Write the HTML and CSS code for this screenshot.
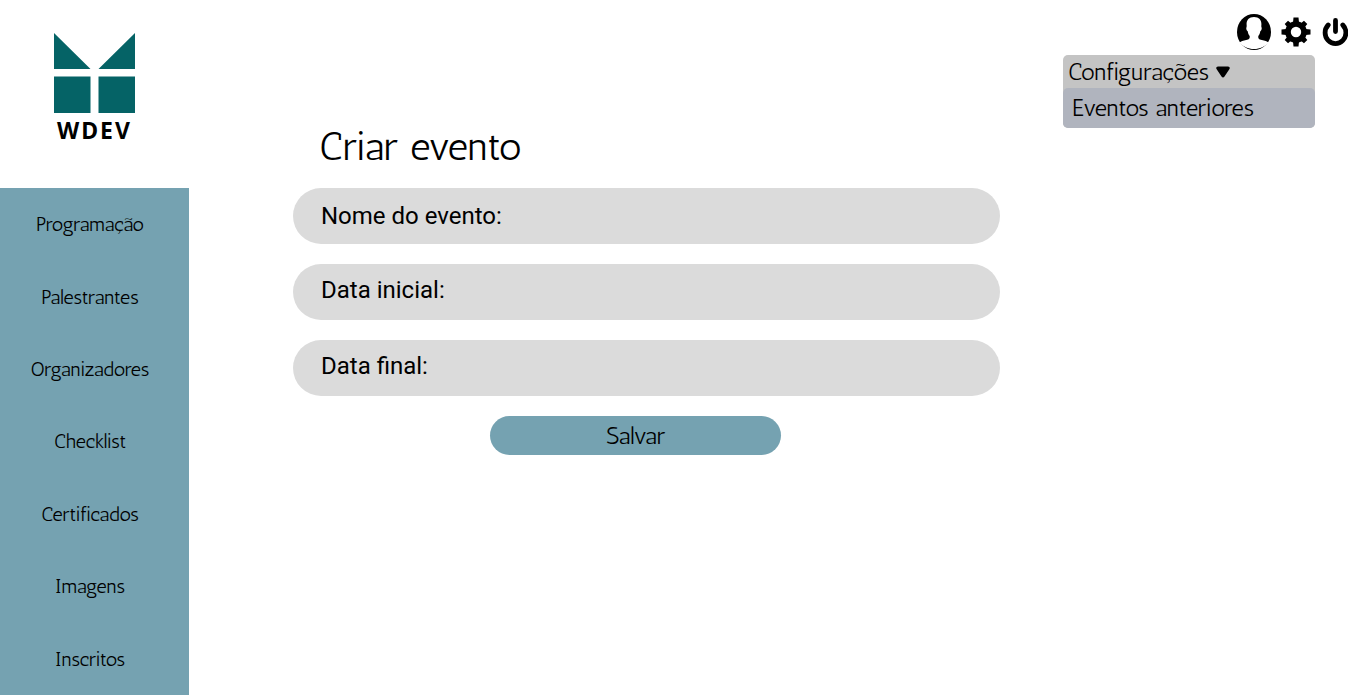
FILE: index.html
```html
<!DOCTYPE html>
<html lang="pt-BR">
<head>
<meta charset="utf-8">
<meta name="viewport" content="width=device-width, initial-scale=1">
<title>Criar evento</title>
<link rel="stylesheet" href="styles.css">
</head>
<body>
<div class="layout">
  <aside class="sidebar">
    <div class="brand">
      <svg class="brand-mark" viewBox="0 0 81 80" aria-hidden="true">
        <path d="M0 0L36.500 36H0zM81 0V36H44.500zM0 43.500H36.500V80H0zM44.500 43.500H81V80H44.500z"/>
      </svg>
      <span class="brand-name">WDEV</span>
    </div>
    <nav class="menu">
      <a class="menu-link" href="#">Programação</a>
      <a class="menu-link" href="#">Palestrantes</a>
      <a class="menu-link" href="#">Organizadores</a>
      <a class="menu-link" href="#">Checklist</a>
      <a class="menu-link" href="#">Certificados</a>
      <a class="menu-link" href="#">Imagens</a>
      <a class="menu-link" href="#">Inscritos</a>
    </nav>
  </aside>
  <main class="main">
    <header class="topbar">
      <div class="actions">
        <button class="icon-button" type="button" aria-label="Perfil">
          <svg width="34" height="36" viewBox="0 0 34 36" aria-hidden="true">
            <ellipse cx="17" cy="18" rx="17" ry="18"/>
            <path fill="#fff" d="M17 3c5 0 7.600 3 7.400 7.600-.1 1.300-.2 2 .2 2.900.4 1.300-.1 3.100-1.300 3.700-.4 2-.9 3.600-2 4.700-.2 2.600.5 3.300 3.500 4.100 2.900.7 5.400 1.300 6.700 2.500C28.400 32.400 22.800 35 17 35S5.600 32.400 2.500 28.500c1.300-1.200 3.800-1.800 6.700-2.500 3-.8 3.700-1.500 3.500-4.100-1.100-1.100-1.600-2.700-2-4.700-1.200-.6-1.700-2.400-1.300-3.700.4-.9.3-1.600.2-2.900C9.400 6 12 3 17 3z"/>
          </svg>
        </button>
        <button class="icon-button" type="button" aria-label="Ajustes">
          <svg width="30" height="30" viewBox="-15 -15 30 30" aria-hidden="true">
            <circle r="8" fill="none" stroke="#000" stroke-width="5.600"/>
            <g id="teeth">
              <path d="M-3 -9.500L-2.500 -14.500H2.500L3 -9.500zM-3 9.500L-2.500 14.500H2.500L3 9.500zM-9.500 -3L-14.500 -2.500V2.500L-9.500 3zM9.500 -3L14.500 -2.500V2.500L9.500 3z"/>
            </g>
            <use href="#teeth" transform="rotate(45) scale(.94)"/>
          </svg>
        </button>
        <button class="icon-button" type="button" aria-label="Sair">
          <svg width="27" height="30" viewBox="0 0 27 30" fill="none" stroke="#000" stroke-width="4.800" stroke-linecap="round" aria-hidden="true">
            <path d="M14.500 3.400V14.500M7.200 8A10.400 10.900 0 1 0 21.800 8"/>
          </svg>
        </button>
      </div>
      <div class="dropdown">
        <button class="dropdown-toggle" type="button" aria-expanded="true">
          Configurações
          <svg width="14" height="12" viewBox="0 0 14 12" aria-hidden="true">
            <path d="M2 .5H12Q15 1 13 3.800L8.500 10.500Q7 12.300 5.500 10.500L1 3.800Q-1 1 2 .5z"/>
          </svg>
        </button>
        <a class="dropdown-item" href="#">Eventos anteriores</a>
      </div>
    </header>
    <form class="event-form">
      <h1 class="title">Criar evento</h1>
      <div class="field">
        <label for="nome">Nome do evento:</label>
        <input id="nome" type="text">
      </div>
      <div class="field field-date">
        <label for="inicio">Data inicial:</label>
        <input id="inicio" type="text">
      </div>
      <div class="field field-date">
        <label for="fim">Data final:</label>
        <input id="fim" type="text">
      </div>
      <button class="save" type="submit">Salvar</button>
    </form>
  </main>
</div>
</body>
</html>
```

FILE: styles.css
```css
* {
  box-sizing: border-box;
}

body {
  margin: 0;
  background: #fff;
  color: #000;
  font-family: Antic, "Open Sans", sans-serif;
  font-weight: 400;
}

button,
input {
  margin: 0;
  padding: 0;
  border: 0;
  background: none;
  color: inherit;
  font: inherit;
}

button {
  cursor: pointer;
}

a {
  color: inherit;
  text-decoration: none;
}

.layout {
  display: flex;
  min-height: 100vh;
}

.sidebar {
  display: flex;
  flex-direction: column;
  flex: 0 0 189px;
}

.brand {
  display: flex;
  flex-direction: column;
  align-items: center;
  gap: 5px;
  padding: 33px 0 46px;
}

.brand-mark {
  width: 81px;
  fill: #056366;
}

.brand-name {
  font: 700 23px/24px "Noto Sans", sans-serif;
  letter-spacing: 2px;
}

.menu {
  display: flex;
  flex: 1;
  flex-direction: column;
  background: #75a2b1;
}

.menu-link {
  display: flex;
  flex: 1;
  align-items: center;
  justify-content: center;
  padding-right: 9px;
  font-size: 20px;
  line-height: 24px;
}

.main {
  flex: 1;
}

.topbar {
  display: flex;
  flex-direction: column;
  align-items: flex-end;
  gap: 5px;
  padding: 14px 22px 0 0;
}

.actions {
  display: flex;
  align-items: center;
  gap: 10px;
}

.icon-button svg {
  display: block;
}

.dropdown {
  display: flex;
  flex-direction: column;
  width: 252px;
  margin-right: 33px;
  border-radius: 5px;
  background: #c4c4c4;
  font-size: 24px;
}

.dropdown-toggle {
  display: flex;
  align-items: center;
  gap: 7px;
  padding-left: 5px;
  line-height: 33px;
}

.dropdown-item {
  padding-left: 9px;
  border-radius: 5px;
  background: #b0b4be;
  line-height: 40px;
}

.event-form {
  display: flex;
  flex-direction: column;
  gap: 20px;
  max-width: 811px;
  padding-left: 104px;
}

.title {
  margin: 0;
  padding: 0 0 4px 26px;
  font-size: 40px;
  font-weight: 400;
  line-height: 36px;
}

.field {
  display: flex;
  align-items: center;
  gap: 12px;
  height: 56px;
  padding: 0 28px;
  border-radius: 28px;
  background: #dbdbdb;
  font: 400 24px/28px Roboto, sans-serif;
}

.field-date {
  padding-bottom: 4px;
}

.field input {
  flex: 1;
  min-width: 0;
}

.save {
  align-self: center;
  width: 291px;
  margin-right: 22px;
  border-radius: 20px;
  background: #75a2b1;
  font-size: 24px;
  line-height: 39px;
}
```
